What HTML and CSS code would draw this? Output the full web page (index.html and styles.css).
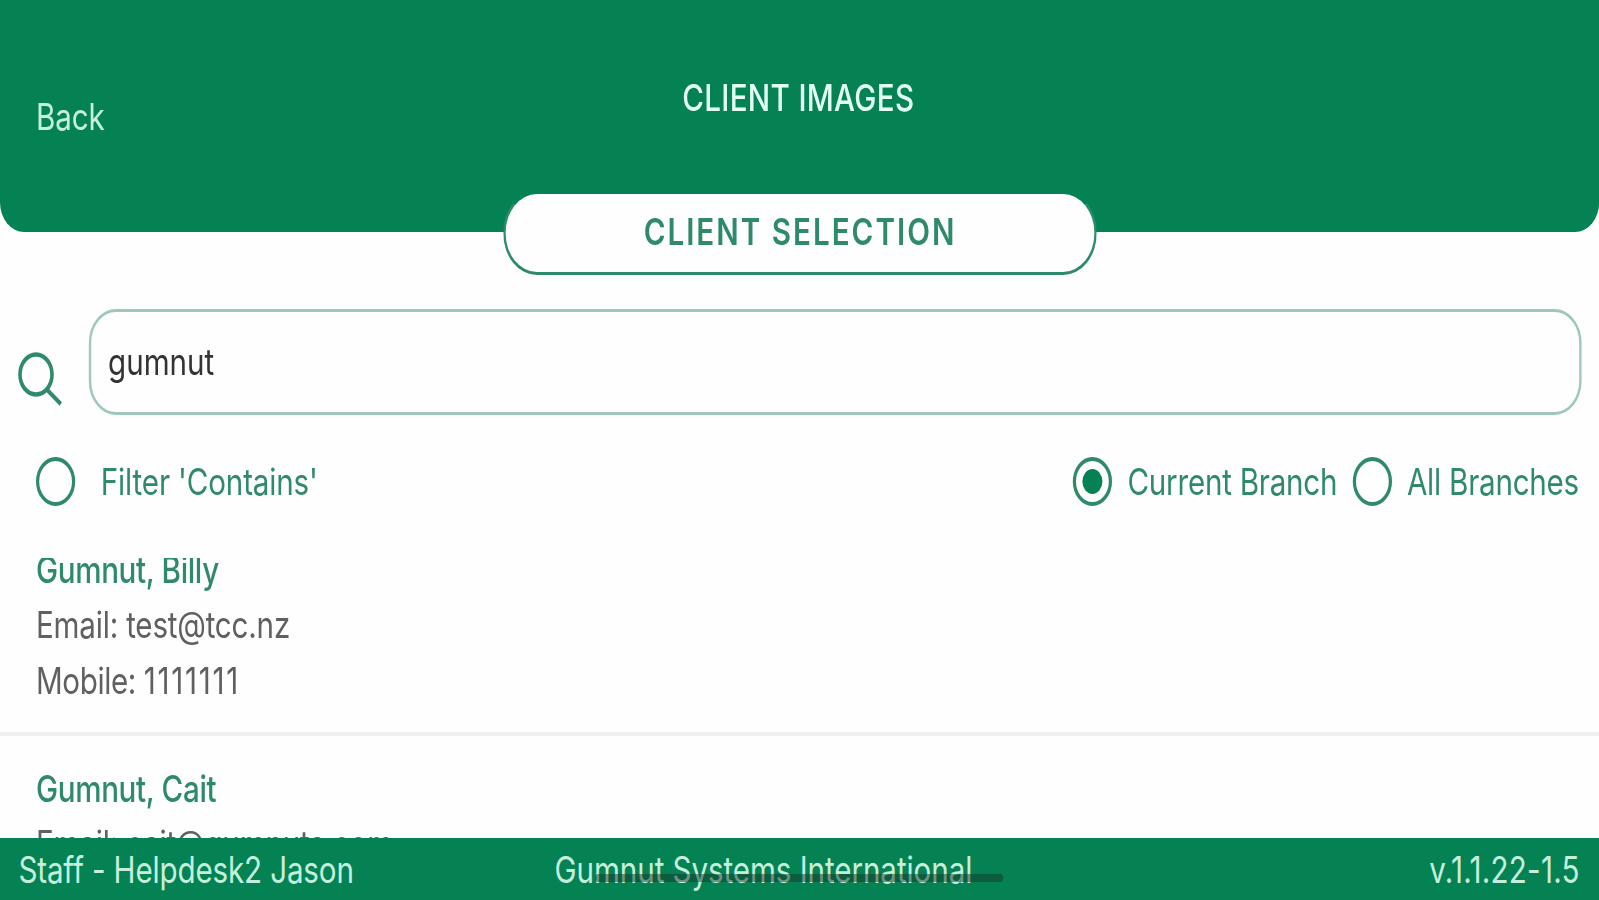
FILE: index.html
```html
<!DOCTYPE html>
<html lang="en">
<head>
  <meta charset="UTF-8">
  <meta name="viewport" content="width=device-width, initial-scale=1.0">
  <title>Client Images</title>
  <link rel="stylesheet" href="styles.css">
</head>
<body>
  <div class="screen">
    <header class="header">
      <a class="back" href="#">Back</a>
      <h1 class="title">CLIENT IMAGES</h1>
    </header>

    <h2 class="section-pill">CLIENT SELECTION</h2>

    <!-- Search -->
    <div class="search">
      <svg class="search-icon" width="60" height="56" viewBox="0 0 60 56">
        <circle cx="24" cy="22.500" r="20"/>
        <path d="M37.500 37.500 L55 52"/>
      </svg>
      <div class="search-box"><span class="search-text">gumnut</span></div>
    </div>

    <!-- Filters -->
    <div class="filters">
      <div class="option contains"><span class="radio"></span><span class="contains-text">Filter 'Contains'</span></div>
      <div class="option current"><span class="radio checked"></span><span class="current-text">Current Branch</span></div>
      <div class="option all"><span class="radio"></span><span class="all-text">All Branches</span></div>
    </div>

    <!-- Clients -->
    <div class="clients">
      <div class="client">
        <p class="name">Gumnut, Billy</p>
        <p class="email">Email: test@tcc.nz</p>
        <p class="mobile">Mobile: <span class="number">1111111</span></p>
      </div>
      <div class="client">
        <p class="name">Gumnut, Cait</p>
        <p class="email">Email: cait@gumnuts.com</p>
      </div>
    </div>

    <footer class="footer">
      <span class="staff">Staff - Helpdesk2 Jason</span>
      <span class="company">Gumnut Systems International</span>
      <span class="version">v.1.1.22-1.5</span>
    </footer>
  </div>
</body>
</html>
```
FILE: styles.css
```css
* {
  box-sizing: border-box;
}

html {
  overflow: hidden;
}

body {
  width: 100vw;
  margin: 0;
  overflow: hidden;
  background-color: #fefefe;
  font-family: Inter, Roboto, sans-serif;
}

/* The screen is laid out wide and squeezed to the window */
.screen {
  display: flex;
  flex-direction: column;
  width: 125vw;
  height: 100vh;
  transform: scaleX(0.8);
  transform-origin: 0 0;
  overflow: hidden;
  font-size: 37px;
  line-height: 55.5px;
  white-space: nowrap;
  color: #2f8a69;
}

h1, h2, p {
  margin: 0;
  font-size: inherit;
  font-weight: normal;
}

.header {
  display: grid;
  grid-template-columns: 1fr auto 1fr;
  flex: none;
  height: 232px;
  padding: 70px 45px 0;
  border-radius: 0 0 30px 30px;
  background-color: #058254;
}

.back {
  padding-top: 19px;
  color: #c4efdc;
  letter-spacing: -0.2px;
  text-decoration: none;
}

.title {
  margin-left: -3px;
  color: #e4fff3;
  font-weight: 500;
  letter-spacing: 0.4px;
}

.section-pill {
  flex: none;
  width: 742px;
  height: 84px;
  margin: -41px 0 0 629px;
  border: 3px solid #2f8a69;
  border-top-color: #058254;
  border-radius: 42px;
  background-color: #fefefe;
  font-weight: 600;
  line-height: 76px;
  letter-spacing: 2.5px;
  text-align: center;
}

.search {
  display: flex;
  flex: none;
  margin-top: 34px;
  padding: 0 22px 0 20px;
}

.search-icon {
  margin: 43px 30px 0 1px;
  fill: none;
  stroke: #2f8a69;
  stroke-width: 4.5;
}

.search-box {
  flex: 1;
  height: 106px;
  padding: 22px 21px;
  border: 3px solid #9fc8b9;
  border-radius: 34px;
  color: #333;
}

.filters {
  display: flex;
  flex: none;
  margin-top: 42px;
  padding: 0 25px 0 45px;
}

.option {
  display: flex;
  align-items: center;
  height: 49px;
}

.contains {
  flex: 1;
  gap: 32px;
  letter-spacing: -0.2px;
}

.current, .all {
  gap: 19px;
  letter-spacing: -0.3px;
}

.current {
  margin-right: 19px;
}

.radio {
  display: flex;
  width: 49px;
  height: 49px;
  border: 4px solid #2f8a69;
  border-radius: 50%;
}

.checked::after {
  content: "";
  width: 25px;
  height: 25px;
  margin: auto;
  border-radius: 50%;
  background-color: #058254;
}

.clients {
  flex: 1;
  min-height: 0;
  margin-top: 52px;
  overflow: hidden;
}

.client {
  padding: 25.5px 45px 23px;
  border-bottom: 4px solid #efefef;
  color: #606060;
}

/* List is scrolled down a little */
.client:first-child {
  margin-top: -41.500px;
}

.name {
  color: #2f8a69;
  font-weight: 500;
  letter-spacing: -0.45px;
}

.email {
  margin: -1px 0 1px;
  letter-spacing: -0.25px;
}

.mobile {
  letter-spacing: -0.5px;
}

.number {
  letter-spacing: 2.1px;
}

.footer {
  display: flex;
  flex: none;
  position: relative;
  height: 62px;
  padding: 4px 24px 0 23px;
  background-color: #058254;
  color: #c4efdc;
}

.staff {
  letter-spacing: -0.2px;
}

.company {
  margin-left: 251px;
  letter-spacing: -0.1px;
}

.version {
  margin-left: auto;
  letter-spacing: 0.3px;
}

/* Home indicator */
.footer::after {
  content: "";
  position: absolute;
  left: 744px;
  top: 36px;
  width: 510px;
  height: 8px;
  border-radius: 4px;
  background-color: rgba(20, 55, 42, 0.5);
}
```
